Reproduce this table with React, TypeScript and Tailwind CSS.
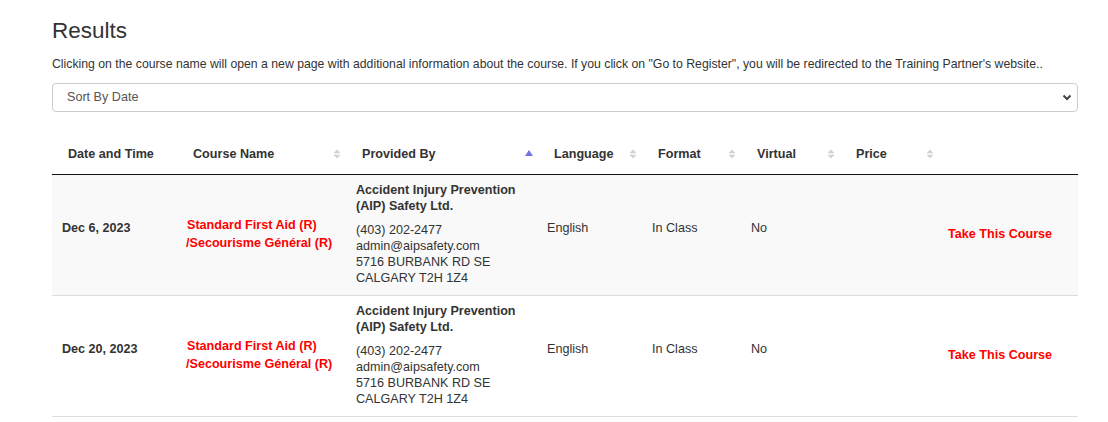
const courses = [
  { date: "Dec 6, 2023", striped: true },
  { date: "Dec 20, 2023", striped: false },
];

const SortIcon = ({ active }: { active?: boolean }) =>
  active ? (
    <svg width="8" height="9" viewBox="0 0 8 9" className="shrink-0">
      <path d="M0 7 L4 1 L8 7 Z" fill="#7474dc" />
    </svg>
  ) : (
    <svg width="8" height="10" viewBox="0 0 8 10" className="shrink-0">
      <path d="M0.5 4.3 L4 0.5 L7.5 4.3 Z" fill="#d0d0d0" />
      <path d="M0.5 5.7 L4 9.5 L7.5 5.7 Z" fill="#d0d0d0" />
    </svg>
  );

const Header = ({ label, sort, active }: { label: string; sort?: boolean; active?: boolean }) => (
  <th className="pl-4 pr-[5px] pt-[9px] pb-[11px] text-left font-bold border-b border-[#111]">
    <div className="flex items-center justify-between leading-[18px]">
      <span>{label}</span>
      {sort && <SortIcon active={active} />}
    </div>
  </th>
);

const App = () => {
  return (
    <div
      className="min-h-screen w-[1108px] bg-white pl-[52px] pr-[30px] pt-[19px] text-[#333] text-[12.6px]"
      style={{ fontFamily: '"Liberation Sans", Arial, sans-serif' }}
    >
      <h3 className="text-[22.5px] leading-[24.75px] font-normal">Results</h3>
      <p className="mt-[11px] leading-[18px] text-[12.25px] whitespace-nowrap">
        Clicking on the course name will open a new page with additional information about the course. If you click on "Go to Register", you will be redirected to the Training Partner's website..
      </p>
      <div className="mt-[10px] h-[29px] flex items-center justify-between border border-[#ccc] rounded-[4px] pl-[14px] pr-[5px] text-[#555]">
        <span>Sort By Date</span>
        <svg width="10" height="7" viewBox="0 0 10 7">
          <path d="M1.5 1.5 L5 5 L8.5 1.5" fill="none" stroke="#444" strokeWidth="2" />
        </svg>
      </div>

      <table className="mt-6 w-full table-fixed border-collapse">
        <colgroup>
          <col className="w-[125px]" />
          <col className="w-[169px]" />
          <col className="w-[192px]" />
          <col className="w-[104px]" />
          <col className="w-[99px]" />
          <col className="w-[99px]" />
          <col className="w-[99px]" />
          <col className="w-[139px]" />
        </colgroup>
        <thead>
          <tr>
            <Header label="Date and Time" />
            <Header label="Course Name" sort />
            <Header label="Provided By" sort active />
            <Header label="Language" sort />
            <Header label="Format" sort />
            <Header label="Virtual" sort />
            <Header label="Price" sort />
            <th className="border-b border-[#111]"></th>
          </tr>
        </thead>
        <tbody>
          {courses.map((c) => (
            <tr key={c.date} className={`${c.striped ? "bg-[#f9f9f9]" : "bg-white"} border-b border-[#ddd]`}>
              <td className="pl-[10px] pt-[7px] pb-[21px] align-middle font-bold leading-[18px]">{c.date}</td>
              <td className="pl-[9px] pt-[7px] pb-[9px] align-middle font-bold leading-[18px] text-[#f00]">
                <span className="block pl-[1px]">Standard First Aid (R)</span>
                <span className="block">/Secourisme Général (R)</span>
              </td>
              <td className="pl-[10px] pt-[7px] pb-[9px] align-middle leading-4">
                <div className="font-bold">
                  Accident Injury Prevention
                  <br />
                  (AIP) Safety Ltd.
                </div>
                <div className="mt-2">
                  (403) 202-2477
                  <br />
                  admin@aipsafety.com
                  <br />
                  5716 BURBANK RD SE
                  <br />
                  CALGARY T2H 1Z4
                </div>
              </td>
              <td className="pl-[9px] pt-[7px] pb-[21px] align-middle leading-[18px]">English</td>
              <td className="pl-[10px] pt-[7px] pb-[21px] align-middle leading-[18px]">In Class</td>
              <td className="pl-[10px] pt-[7px] pb-[21px] align-middle leading-[18px]">No</td>
              <td className="pl-[10px] pt-[7px] pb-[21px] align-middle leading-[18px]"></td>
              <td className="pl-[9px] pt-[7px] pb-[9px] align-middle leading-[18px]">
                <a href="#" className="font-bold text-[#f00]">
                  Take This Course
                </a>
              </td>
            </tr>
          ))}
        </tbody>
      </table>
    </div>
  );
};

export default App;
